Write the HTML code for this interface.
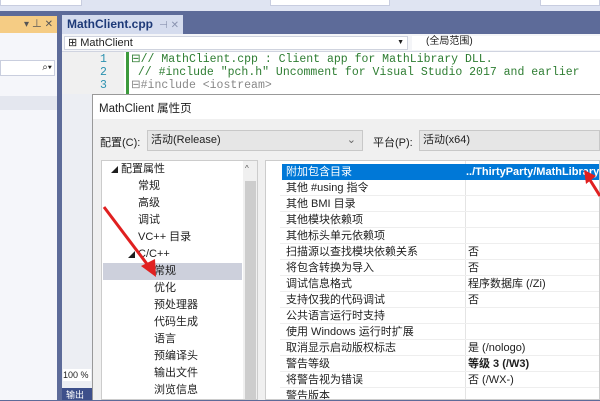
<!DOCTYPE html><html><head><style>
*{margin:0;padding:0;box-sizing:border-box}
body{width:600px;height:400px;overflow:hidden;position:relative;background:#5d6b99;font-family:"Liberation Sans","Noto Sans CJK SC",sans-serif;font-size:11px;color:#1e1e1e}
.a{position:absolute}
.mono{font-family:"Liberation Mono",monospace;font-size:11.5px;color:#2e7d32}
.row{position:absolute;left:0;height:16px;line-height:16px;width:100%;border-bottom:1px solid #eee}
.tr{position:absolute;height:17px;line-height:17px}
</style></head><body>
<div class="a" style="left:0;top:0;width:600px;height:11px;background:#dfe4f2"></div>
<div class="a" style="left:0;top:0;width:82px;height:6px;background:#fff;border:1px solid #c8cde0;border-top:0"></div>
<div class="a" style="left:270px;top:0;width:120px;height:6px;background:#fff;border:1px solid #c8cde0;border-top:0"></div>
<div class="a" style="left:540px;top:0;width:60px;height:6px;background:#fff;border:1px solid #c8cde0;border-top:0"></div>
<!-- left panel -->
<div class="a" style="left:0;top:16px;width:57px;height:17px;background:#f5cc84;font-size:10px;line-height:17px;text-align:right;padding-right:4px;color:#555">▾ ⊥ ✕</div>
<div class="a" style="left:0;top:33px;width:57px;height:367px;background:#f5f6fa"></div>
<div class="a" style="left:0;top:60px;width:55px;height:16px;background:#fff;border:1px solid #c9cede;font-size:10px;text-align:right;line-height:14px;padding-right:2px">⌕▾</div>
<div class="a" style="left:0;top:96px;width:57px;height:14px;background:#e4e7ef"></div>
<!-- tab -->
<div class="a" style="left:62px;top:15px;width:121px;height:19px;background:#d5dcee;font-weight:bold;font-size:12px;line-height:19px;padding-left:5px;color:#1e3a78">MathClient.cpp <span style="font-weight:normal;color:#8a93b0;font-size:10px">&nbsp;⊣ ✕</span></div>
<!-- nav -->
<div class="a" style="left:62px;top:34px;width:538px;height:18px;background:#f4f5f8;border-bottom:1px solid #d0d4e0"></div>
<div class="a" style="left:64px;top:36px;width:344px;height:14px;background:#fff;border:1px solid #cfd3de;line-height:12px;font-size:11px;padding-left:3px">⊞ MathClient<span style="position:absolute;right:3px;font-size:7px">▼</span></div>
<div class="a" style="left:412px;top:36px;width:188px;height:14px;background:#fff;line-height:12px;padding-left:14px;font-size:10px">(全局范围)</div>
<!-- code -->
<div class="a" style="left:62px;top:52px;width:538px;height:42px;background:#fff"></div>
<div class="a" style="left:62px;top:52px;width:62px;height:42px;background:#f0f0f0"></div>
<div class="a" style="left:126px;top:52px;width:3px;height:42px;background:#3c9a3c"></div>
<div class="a mono" style="left:100px;top:53px;color:#2b91af;line-height:13px">1<br>2<br>3</div>
<div class="a mono" style="left:131px;top:53px;line-height:13px;white-space:pre">⊟// MathClient.cpp : Client app for MathLibrary DLL.
 // #include "pch.h" Uncomment for Visual Studio 2017 and earlier
<span style="color:#888">⊟#include &lt;iostream&gt;</span></div>
<!-- bottom left -->
<div class="a" style="left:62px;top:94px;width:30px;height:300px;background:#eceef3"></div>
<div class="a" style="left:63px;top:369px;width:28px;height:12px;background:#fff;font-size:9px;line-height:12px">100 %</div>
<div class="a" style="left:62px;top:388px;width:30px;height:12px;background:#3d4f8a;color:#fff;font-size:9px;padding-left:4px">输出</div>
<!-- dialog -->
<div class="a" style="left:92px;top:94px;width:508px;height:306px;background:#f0f0f0;border-left:1px solid #999;border-top:1px solid #999"></div>
<div class="a" style="left:93px;top:95px;width:507px;height:24px;background:#fff"></div>
<div class="a" style="left:99px;top:100px;font-size:11.5px">MathClient 属性页</div>
<div class="a" style="left:100px;top:134px">配置(C):</div>
<div class="a" style="left:147px;top:130px;width:216px;height:21px;background:#e6e6e6;border:1px solid #c8c8c8;line-height:19px;padding-left:3px">活动(Release)<span style="position:absolute;right:6px;color:#666">⌄</span></div>
<div class="a" style="left:373px;top:134px">平台(P):</div>
<div class="a" style="left:419px;top:130px;width:181px;height:21px;background:#e6e6e6;border:1px solid #c8c8c8;line-height:19px;padding-left:3px">活动(x64)</div>
<!-- tree -->
<div class="a" style="left:101px;top:160px;width:157px;height:240px;background:#fff;border:1px solid #ccc;overflow:hidden">
<div class="a" style="left:141px;top:0;width:15px;height:240px;background:#f0f0f0"></div>
<div class="a" style="left:143px;top:20px;width:11px;height:220px;background:#cdcdcd"></div>
<div class="a" style="left:143px;top:3px;font-size:8px;color:#555">^</div>
<div class="a" style="left:1px;top:102px;width:139px;height:17px;background:#cdd0dc"></div>
<div class="tr" style="left:9px;top:0"><span style="font-size:7px">◢</span> 配置属性</div>
<div class="tr" style="left:36px;top:17px">常规</div>
<div class="tr" style="left:36px;top:34px">高级</div>
<div class="tr" style="left:36px;top:51px">调试</div>
<div class="tr" style="left:36px;top:68px">VC++ 目录</div>
<div class="tr" style="left:26px;top:85px"><span style="font-size:7px">◢</span> C/C++</div>
<div class="tr" style="left:52px;top:102px">常规</div>
<div class="tr" style="left:52px;top:119px">优化</div>
<div class="tr" style="left:52px;top:136px">预处理器</div>
<div class="tr" style="left:52px;top:153px">代码生成</div>
<div class="tr" style="left:52px;top:170px">语言</div>
<div class="tr" style="left:52px;top:187px">预编译头</div>
<div class="tr" style="left:52px;top:204px">输出文件</div>
<div class="tr" style="left:52px;top:221px">浏览信息</div>
</div>
<!-- grid -->
<div class="a" style="left:265px;top:160px;width:335px;height:240px;background:#fff;border:1px solid #ccc;overflow:hidden">
<div class="a" style="left:199px;top:0;width:1px;height:240px;background:#e4e4e4"></div>
<div class="a" style="left:16px;top:3px;width:319px;height:16px;background:#0078d7"></div>
<div class="a" style="left:14px;top:3px;width:321px">
<div class="row" style="top:0;color:#fff;border:0"><span style="padding-left:6px">附加包含目录</span><span class="a" style="left:186px;font-weight:bold">../ThirtyParty/MathLibrary</span></div>
<div class="row" style="top:16px;padding-left:6px">其他 #using 指令</div>
<div class="row" style="top:32px;padding-left:6px">其他 BMI 目录</div>
<div class="row" style="top:48px;padding-left:6px">其他模块依赖项</div>
<div class="row" style="top:64px;padding-left:6px">其他标头单元依赖项</div>
<div class="row" style="top:80px;padding-left:6px">扫描源以查找模块依赖关系<span class="a" style="left:188px">否</span></div>
<div class="row" style="top:96px;padding-left:6px">将包含转换为导入<span class="a" style="left:188px">否</span></div>
<div class="row" style="top:112px;padding-left:6px">调试信息格式<span class="a" style="left:188px">程序数据库 (/Zi)</span></div>
<div class="row" style="top:128px;padding-left:6px">支持仅我的代码调试<span class="a" style="left:188px">否</span></div>
<div class="row" style="top:144px;padding-left:6px">公共语言运行时支持</div>
<div class="row" style="top:160px;padding-left:6px">使用 Windows 运行时扩展</div>
<div class="row" style="top:176px;padding-left:6px">取消显示启动版权标志<span class="a" style="left:188px">是 (/nologo)</span></div>
<div class="row" style="top:192px;padding-left:6px">警告等级<span class="a" style="left:188px;font-weight:bold">等级 3 (/W3)</span></div>
<div class="row" style="top:208px;padding-left:6px">将警告视为错误<span class="a" style="left:188px">否 (/WX-)</span></div>
<div class="row" style="top:224px;padding-left:6px">警告版本</div>
</div></div>
<!-- arrows -->
<svg class="a" style="left:0;top:0" width="600" height="400">
<line x1="104" y1="207" x2="150" y2="268" stroke="#e02020" stroke-width="3"/>
<polygon points="156,277 141,266 155,259" fill="#e02020"/>
<line x1="600" y1="196" x2="590" y2="180" stroke="#e02020" stroke-width="3"/>
<polygon points="584,170 596,176 586,184" fill="#e02020"/>
</svg>
</body></html>
